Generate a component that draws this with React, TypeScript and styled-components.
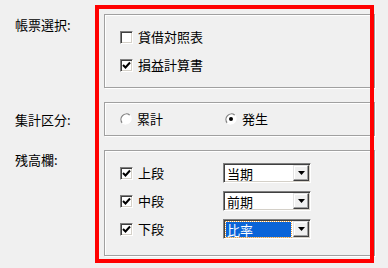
import React from 'react';
import styled, { createGlobalStyle } from 'styled-components';

const GlobalStyle = createGlobalStyle`
  html, body {
    margin: 0;
    padding: 0;
    background: #f0f0f0;
  }
  body {
    font-family: "Noto Sans CJK JP", "Noto Sans", sans-serif;
    font-size: 13px;
    color: #000;
  }
`;

const Page = styled.main`
  position: relative;
  width: 388px;
  height: 268px;
  box-sizing: border-box;
  padding-top: 14px;
  display: grid;
  grid-template-columns: 104px 271px;
  grid-template-rows: 74px 34px 106px;
  row-gap: 14px;
`;

const Label = styled.div<{ $top: number }>`
  padding-left: 15px;
  padding-top: ${p => p.$top}px;
  line-height: 16px;
  white-space: nowrap;
`;

const GroupBox = styled.section<{ $pad: number }>`
  box-sizing: border-box;
  border: 1px solid #a0a0a0;
  box-shadow: inset 1px 1px 0 #fff, 1px 1px 0 #fff;
  padding: ${p => p.$pad}px 0 0 15px;
  display: flex;
  flex-direction: column;
  gap: 8px;
`;

const Row = styled.div`
  display: flex;
  align-items: center;
  height: 20px;
`;

const Option = styled.label<{ $width?: number }>`
  display: flex;
  align-items: center;
  gap: 5px;
  width: ${p => (p.$width ? `${p.$width}px` : 'auto')};
  line-height: 16px;
  white-space: nowrap;
`;

const CheckFrame = styled.span`
  box-sizing: border-box;
  width: 13px;
  height: 13px;
  flex: none;
  background: #fff;
  border: 1px solid;
  border-color: #808080 #fff #fff #808080;
  box-shadow: inset 1px 1px 0 #404040, inset -1px -1px 0 #d4d0c8;
  display: flex;
  align-items: center;
  justify-content: center;
`;

const Combo = styled.div`
  box-sizing: border-box;
  width: 88px;
  height: 20px;
  display: flex;
  align-items: center;
  background: #fff;
  border: 1px solid;
  border-color: #808080 #fff #fff #808080;
  box-shadow: inset 1px 1px 0 #404040, inset -1px -1px 0 #d4d0c8;
  padding: 1px 1px 1px 2px;
`;

const ComboText = styled.span<{ $selected?: boolean }>`
  flex: 1;
  box-sizing: border-box;
  height: 15px;
  line-height: 15px;
  padding-left: 1px;
  margin-right: 2px;
  background: ${p => (p.$selected ? '#0a64d8' : 'transparent')};
  color: ${p => (p.$selected ? '#fff' : '#000')};
  outline: ${p => (p.$selected ? '1px dotted #e8a040' : 'none')};
  white-space: nowrap;
`;

const ComboButton = styled.span`
  box-sizing: border-box;
  width: 16px;
  height: 16px;
  flex: none;
  background: #f0f0f0;
  border: 1px solid;
  border-color: #e3e3e3 #404040 #404040 #e3e3e3;
  box-shadow: inset -1px -1px 0 #a0a0a0, inset 1px 1px 0 #fff;
  display: flex;
  align-items: center;
  justify-content: center;
`;

const Highlight = styled.div`
  position: absolute;
  left: 95px;
  top: 5px;
  width: 279px;
  height: 258px;
  box-sizing: border-box;
  border: 4px solid #ff0000;
  pointer-events: none;
`;

function CheckBox({ checked }: { checked?: boolean }) {
  return (
    <CheckFrame>
      {checked && (
        <svg width="9" height="9" viewBox="0 0 9 9">
          <polyline points="1,4 3.5,6.5 8,1.5" fill="none" stroke="#000" strokeWidth="2" />
        </svg>
      )}
    </CheckFrame>
  );
}

function Radio({ checked }: { checked?: boolean }) {
  return (
    <svg width="12" height="12" viewBox="0 0 12 12" style={{ flex: 'none' }}>
      <circle cx="6" cy="6" r="5" fill="#fff" />
      <path d="M2.2 9.8 A5.4 5.4 0 0 1 9.8 2.2" fill="none" stroke="#808080" strokeWidth="1.2" />
      <path d="M9.8 2.2 A5.4 5.4 0 0 1 2.2 9.8" fill="none" stroke="#fff" strokeWidth="1.2" />
      {checked && <circle cx="6" cy="6" r="2" fill="#000" />}
    </svg>
  );
}

function Select({ value, selected }: { value: string; selected?: boolean }) {
  return (
    <Combo>
      <ComboText $selected={selected}>{value}</ComboText>
      <ComboButton>
        <svg width="7" height="4" viewBox="0 0 7 4">
          <polygon points="0,0 7,0 3.5,4" fill="#000" />
        </svg>
      </ComboButton>
    </Combo>
  );
}

const rows = [
  { name: '上段', value: '当期' },
  { name: '中段', value: '前期' },
  { name: '下段', value: '比率', selected: true },
];

export default function App() {
  return (
    <>
      <GlobalStyle />
      <Page>
        <Label $top={3}>帳票選択:</Label>
        <GroupBox $pad={12}>
          <Row>
            <Option>
              <CheckBox />
              貸借対照表
            </Option>
          </Row>
          <Row>
            <Option>
              <CheckBox checked />
              損益計算書
            </Option>
          </Row>
        </GroupBox>

        <Label $top={10}>集計区分:</Label>
        <GroupBox $pad={6}>
          <Row>
            <Option $width={105}>
              <Radio />
              累計
            </Option>
            <Option>
              <Radio checked />
              発生
            </Option>
          </Row>
        </GroupBox>

        <Label $top={2}>残高欄:</Label>
        <GroupBox $pad={12}>
          {rows.map(r => (
            <Row key={r.name}>
              <Option $width={103}>
                <CheckBox checked />
                {r.name}
              </Option>
              <Select value={r.value} selected={r.selected} />
            </Row>
          ))}
        </GroupBox>
        <Highlight />
      </Page>
    </>
  );
}
